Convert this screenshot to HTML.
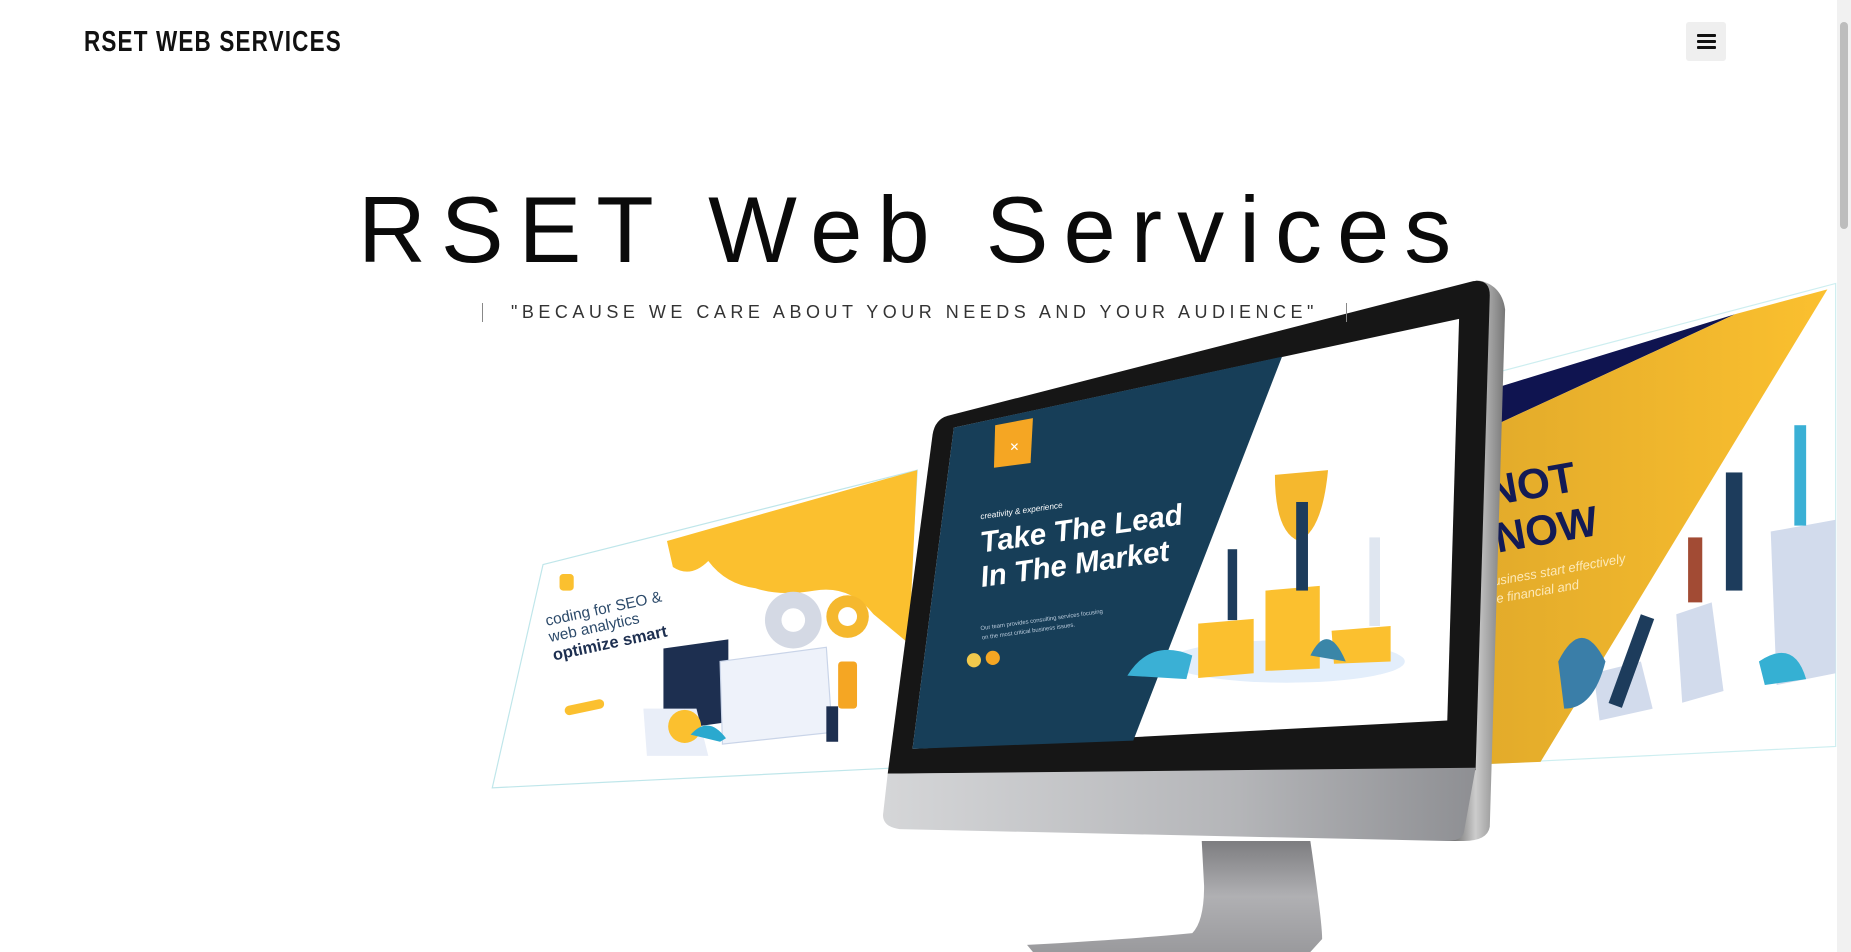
<!DOCTYPE html>
<html><head><meta charset="utf-8"><style>
html,body{margin:0;padding:0;width:1851px;height:952px;overflow:hidden;background:#fff;font-family:"Liberation Sans",sans-serif}
.logo{position:absolute;left:84px;top:26px;font-size:29px;font-weight:bold;letter-spacing:1.5px;transform:scaleX(0.775);transform-origin:left top;color:#111;white-space:nowrap}
.burger{position:absolute;left:1686px;top:22px;width:40px;height:39px;background:#efefef;border-radius:3px}
.burger i{position:absolute;left:11px;width:19px;height:3px;background:#111;border-radius:1px}
.sb{position:absolute;left:1837px;top:0;width:14px;height:952px;background:#f1f1f1}
.sb .t{position:absolute;left:3px;top:22px;width:8px;height:207px;background:#bdbdbd;border-radius:4px}
h1{position:absolute;left:358px;top:174px;margin:0;font-weight:normal;font-size:94px;letter-spacing:15px;color:#0a0a0a;white-space:nowrap;line-height:1.2}
.sub{position:absolute;left:511px;top:302px;font-size:18px;letter-spacing:4.5px;color:#333;white-space:nowrap}
.vl{position:absolute;top:303px;width:1px;height:19px;background:#888}
svg{position:absolute;left:0;top:0}
</style></head><body>
<svg width="1851" height="952" viewBox="0 0 1568 806" preserveAspectRatio="none">
<defs>
<linearGradient id="chin" x1="0" x2="1"><stop offset="0" stop-color="#d5d6d8"/><stop offset=".6" stop-color="#b4b5b8"/><stop offset="1" stop-color="#8e8f93"/></linearGradient>
<linearGradient id="stand" x1="0" y1="0" x2="0" y2="1"><stop offset="0" stop-color="#7d7d80"/><stop offset=".5" stop-color="#b0b0b3"/><stop offset="1" stop-color="#9a9a9d"/></linearGradient>
<linearGradient id="yel" x1="0" x2="1"><stop offset="0" stop-color="#e0a92a"/><stop offset="1" stop-color="#fbc02f"/></linearGradient>
<linearGradient id="side" x1="0" x2="1"><stop offset="0" stop-color="#555"/><stop offset=".5" stop-color="#ccc"/><stop offset="1" stop-color="#777"/></linearGradient>
</defs>
<polygon points="460,478 777,398 762,650 417,667" fill="#fff" stroke="#bfe6ea" stroke-width="1"/>
<path d="M565,458 L777,398 L770,545 L740,520 Q720,495 690,500 Q660,505 640,498 Q615,495 600,475 Q585,490 570,480 Z" fill="#fbc02f"/>
<circle cx="672" cy="525" r="24" fill="#d4d9e4"/><circle cx="672" cy="525" r="10" fill="#fff"/>
<circle cx="718" cy="522" r="18" fill="#f5b82e"/><circle cx="718" cy="522" r="8" fill="#fff"/>
<rect x="562" y="548" width="55" height="70" fill="#1d2f50" transform="skewY(-8) translate(0,80)"/>
<polygon points="610,560 700,548 705,620 612,630" fill="#eef2fa" stroke="#c9d4e8"/>
<polygon points="545,600 590,600 600,640 548,640" fill="#e9eef8"/>
<circle cx="580" cy="615" r="14" fill="#fbc02f"/>
<path d="M585,622 Q600,605 615,625 L610,628 Z" fill="#2aa9cf"/>
<rect x="710" y="560" width="16" height="40" fill="#f5a623" rx="3"/>
<rect x="700" y="598" width="10" height="30" fill="#1d2f50"/>
<rect x="474" y="486" width="12" height="14" rx="3" fill="#fbc02f"/>
<g transform="rotate(-12 462 525)" font-family="Liberation Sans,sans-serif">
<text x="462" y="530" font-size="13" fill="#2c4a6a">coding for SEO &amp;</text>
<text x="462" y="544" font-size="13" fill="#2c4a6a">web analytics</text>
<text x="462" y="560" font-size="14" font-weight="bold" fill="#1d2f50">optimize smart</text>
<rect x="462" y="600" width="34" height="8" rx="4" fill="#fbc02f"/>
</g>
<polygon points="1250,320 1555,240 1555,632 1230,648" fill="#fff" stroke="#cdeef0"/>
<polygon points="1262,330 1470,266 1262,362" fill="#0f1450"/>
<polygon points="1262,362 1470,266 1548,245 1305,645 1232,648" fill="url(#yel)"/>
<g transform="rotate(-10 1265 430)" font-family="Liberation Sans,sans-serif" font-weight="bold" fill="#131b55">
<text x="1262" y="428" font-size="36">NOT</text><text x="1262" y="468" font-size="36">NOW</text>
<text x="1248" y="495" font-size="11" font-style="italic" fill="#fde9b8" font-weight="normal">business start effectively</text>
<text x="1245" y="510" font-size="11" font-style="italic" fill="#fde9b8" font-weight="normal">the financial and</text>
</g>
<polygon points="1420,520 1450,510 1460,585 1425,595" fill="#d2dbec"/>
<polygon points="1500,450 1555,440 1555,570 1505,580" fill="#d2dbec"/>
<polygon points="1350,570 1390,560 1400,600 1355,610" fill="#d2dbec"/>
<rect x="1462" y="400" width="14" height="100" fill="#1d3c5c"/>
<rect x="1520" y="360" width="10" height="85" fill="#3ab0d5"/>
<rect x="1430" y="455" width="12" height="55" fill="#a24b34"/>
<path d="M1320,560 Q1340,520 1360,560 Q1350,600 1325,600 Z" fill="#3a7ea8"/>
<path d="M1490,560 Q1520,540 1530,575 L1495,580 Z" fill="#35b0d3"/>
<rect x="1390" y="520" width="12" height="80" fill="#1d3c5c" transform="rotate(20 1390 520)"/>
<path d="M1250,237 Q1272,240 1275,262 L1262,700 Q1260,712 1240,712 L1225,712 Z" fill="url(#side)"/>
<path d="M803,352 L1248,238 Q1262,236 1262,250 L1250,652 L752,655 L790,368 Q792,355 803,352 Z" fill="#161616"/>
<polygon points="808,362 1236,270 1226,610 773,634" fill="#fff"/>
<polygon points="808,362 1086,302 960,627 773,634" fill="#173e58"/>
<polygon points="843,360 875,354 873,392 842,396" fill="#f5a623"/>
<text x="855" y="382" font-size="10" fill="#fff" font-family="Liberation Sans,sans-serif">✕</text>
<g transform="rotate(-8 830 470)" font-family="Liberation Sans,sans-serif" fill="#fff">
<text x="835" y="440" font-size="7" font-style="italic">creativity &amp; experience</text>
<text x="832" y="468" font-size="25" font-weight="bold" font-style="italic">Take The Lead</text>
<text x="828" y="497" font-size="25" font-weight="bold" font-style="italic">In The Market</text>
<text x="822" y="533" font-size="5" fill="#bcd">Our team provides consulting services focusing</text>
<text x="822" y="541" font-size="5" fill="#bcd">on the most critical business issues.</text>
</g>
<circle cx="825" cy="559" r="6" fill="#f2c94c"/><circle cx="841" cy="557" r="6" fill="#f5a623"/>
<ellipse cx="1090" cy="560" rx="100" ry="18" fill="#e3eefb"/>
<polygon points="1015,528 1062,524 1062,570 1015,574" fill="#fbc02f"/>
<polygon points="1072,500 1118,496 1118,566 1072,568" fill="#fbc02f"/>
<polygon points="1128,534 1178,530 1178,560 1130,562" fill="#fbc02f"/>
<path d="M1080,402 L1125,398 Q1120,450 1100,458 Q1080,450 1080,402 Z" fill="#f5b82e"/>
<rect x="1098" y="425" width="10" height="75" fill="#1d3c5c"/>
<rect x="1040" y="465" width="8" height="60" fill="#1d3c5c"/>
<rect x="1160" y="455" width="9" height="75" fill="#dfe6f0"/>
<path d="M955,572 Q975,540 1010,555 L1005,575 Z" fill="#3ab0d5"/>
<path d="M1110,555 Q1125,525 1140,560 Z" fill="#3a86a8"/>
<path d="M752,655 L1250,650 L1240,705 Q1238,712 1225,712 L762,702 Q748,700 748,690 Z" fill="url(#chin)"/>
<path d="M1018,712 L1110,712 Q1120,780 1120,795 L1110,806 L875,806 L870,800 Q960,795 1010,790 Q1020,780 1020,750 Z" fill="url(#stand)"/>
</svg>
<div class="logo">RSET WEB SERVICES</div>
<div class="burger"><i style="top:12px"></i><i style="top:18px"></i><i style="top:24px"></i></div>
<h1>RSET Web Services</h1>
<div class="vl" style="left:482px"></div>
<div class="sub">"BECAUSE WE CARE ABOUT YOUR NEEDS AND YOUR AUDIENCE"</div>
<div class="vl" style="left:1346px"></div>
<div class="sb"><div class="t"></div></div>
</body></html>
